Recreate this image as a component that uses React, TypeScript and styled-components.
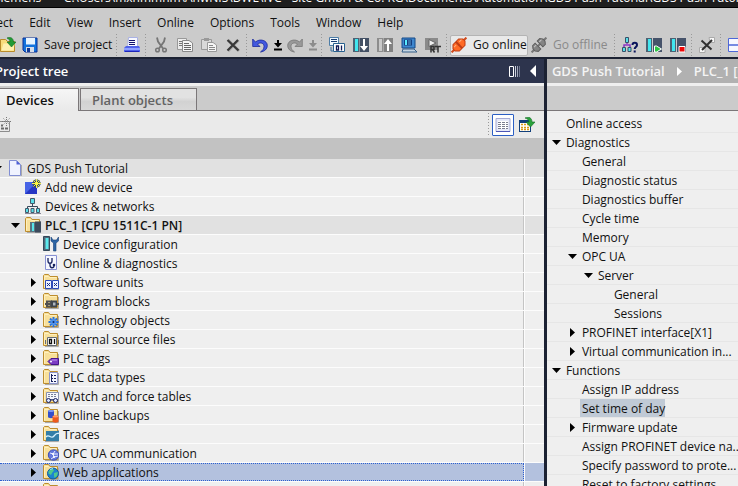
import React from "react";
import styled, { createGlobalStyle, css } from "styled-components";

const GlobalStyle = createGlobalStyle`
  * { box-sizing: border-box; }
  html, body, #root { height: 100%; }
  body {
    margin: 0;
    overflow: hidden;
    background: #cbcbcb;
    color: #111;
    font-family: "Open Sans", "Noto Sans", sans-serif;
    font-size: 12px;
    line-height: 18px;
  }
  button { font: inherit; color: inherit; background: none; border: 0; padding: 0; margin: 0; }
  a { color: inherit; text-decoration: none; }
  ul { list-style: none; margin: 0; padding: 0; }
`;

/* ---------- layout ---------- */

const Window = styled.div`
  display: flex;
  flex-direction: column;
  height: 100vh;
  overflow: hidden;
`;

const TitleBar = styled.header`
  flex: none;
  display: flex;
  align-items: flex-end;
  height: 8px;
  padding-bottom: 3px;
  overflow: hidden;
  background: #1e1e1e;
  border-bottom: 1px solid #000;
  color: #fff;
  white-space: pre;
  line-height: 12px;
  span { margin-left: -6px; }
`;

const MenuBar = styled.nav`
  flex: none;
  display: flex;
  gap: 16px;
  height: 25px;
  padding-top: 5px;
  margin-left: -26px;
  white-space: nowrap;
`;

const ToolBar = styled.div`
  flex: none;
  display: flex;
  align-items: center;
  height: 24px;
  margin-left: -3px;
  overflow: hidden;
  > * { flex: none; }
`;

const ToolButton = styled.button<{ $w?: number; $muted?: boolean; $boxed?: boolean }>`
  display: flex;
  align-items: center;
  justify-content: ${(p) => (p.$w && p.$w > 40 ? "flex-start" : "center")};
  gap: 6px;
  width: ${(p) => p.$w ?? 24}px;
  height: 21px;
  padding-left: ${(p) => (p.$w && p.$w > 40 ? 3 : 0)}px;
  white-space: nowrap;
  color: ${(p) => (p.$muted ? "#8a8a8a" : "#111")};
  ${(p) =>
    p.$boxed &&
    css`
      background: #e9e9e9;
      border: 1px solid #b4b4b4;
      border-radius: 2px;
      padding-left: 0;
    `}
`;

const Separator = styled.span`
  width: 1px;
  height: 23px;
  margin: 0 3px 0 1px;
  background: repeating-linear-gradient(#999 0 1px, transparent 1px 3px);
`;

const Body = styled.main`
  flex: 1;
  min-height: 0;
  display: grid;
  grid-template-columns: minmax(0, 74fr) 3px minmax(0, 26fr);
  border-top: 2px solid #1c2233;
`;

const Divider = styled.div`
  background: #1c2233;
`;

const Panel = styled.section`
  display: flex;
  flex-direction: column;
  min-width: 0;
  min-height: 0;
  overflow: hidden;
  background: #efefef;
  > * { flex: none; }
`;

const PanelHeader = styled.div<{ $tone: string }>`
  display: flex;
  align-items: center;
  gap: 2px;
  height: 27px;
  background: ${(p) => p.$tone};
  border-bottom: 3px solid #efefef;
  color: #fff;
  font-size: 13px;
  font-weight: 600;
  white-space: nowrap;
  overflow: hidden;
`;

const HeaderButton = styled.button`
  display: grid;
  place-items: center;
  height: 22px;
  min-width: 11px;
  &:last-child { width: 22px; }
`;

const PanelTitle = styled.h1`
  flex: 1;
  margin: 0 0 0 -5px;
  font: inherit;
`;

const Crumbs = styled.nav`
  display: flex;
  align-items: center;
  gap: 12px;
  padding-left: 5px;
  color: #f4f4f4;
`;

const TabStrip = styled.div`
  display: flex;
  align-items: flex-end;
  gap: 1px;
  height: 25px;
  background: #cbcbcb;
  box-shadow: inset 0 -1px #7b7779;
`;

const Tab = styled.button<{ $active?: boolean }>`
  height: ${(p) => (p.$active ? 23 : 22)}px;
  width: ${(p) => (p.$active ? 79 : 117)}px;
  padding-left: ${(p) => (p.$active ? 6 : 11)}px;
  margin-bottom: ${(p) => (p.$active ? 0 : 1)}px;
  text-align: left;
  border: 1px solid #7b7779;
  border-bottom: 0;
  border-left-width: ${(p) => (p.$active ? 0 : 1)}px;
  background: ${(p) =>
    p.$active
      ? "linear-gradient(#f6f6f6, #e9e9e9)"
      : "linear-gradient(#e2e2e2 0 40%, #d2d2d2 60%, #d8d8d8)"};
  color: ${(p) => (p.$active ? "#111" : "#636363")};
  font-size: 13px;
  font-weight: 600;
  line-height: 20px;
`;

const PanelTools = styled.div`
  display: flex;
  align-items: center;
  height: 27px;
  padding-right: 4px;
  background: #eaeaea;
  > svg { margin-left: -5px; }
`;

const Spacer = styled.span`
  flex: 1;
`;

const ViewButton = styled.button<{ $on?: boolean }>`
  display: grid;
  place-items: center;
  width: 22px;
  height: 22px;
  margin-right: 2px;
  border: 1px solid ${(p) => (p.$on ? "#2c5fc4" : "transparent")};
  border-radius: 1px;
  background: ${(p) => (p.$on ? "#fff" : "none")};
`;

const ColumnHead = styled.div`
  height: 21px;
  background: #c2c2c2;
`;

/* ---------- trees ---------- */

const TreeRow = styled.li<{ $depth: number; $shade?: boolean; $selected?: boolean }>`
  display: flex;
  height: 19px;
  border-bottom: 1px solid #fcfcfc;
  background: ${(p) => (p.$selected ? "#b3c1de" : p.$shade ? "#e1e1e1" : "#efefef")};
  font-weight: ${(p) => (p.$shade && p.$depth > 0 ? 600 : 400)};
  white-space: nowrap;
`;

const TreeCell = styled.div<{ $depth: number; $selected?: boolean }>`
  flex: 1;
  display: flex;
  align-items: center;
  height: 18px;
  padding-left: ${(p) => p.$depth * 18 - 9}px;
  margin-left: ${(p) => (p.$depth === 0 ? -9 : 0)}px;
  border-right: 1px solid #c4c4c4;
  ${(p) =>
    p.$selected &&
    css`
      border-top: 1px dotted #2c5fd0;
      border-bottom: 1px dotted #2c5fd0;
      border-right: 1px dotted #2c5fd0;
    `}
`;

const TreeLabel = styled.span`
  padding-top: 2px;
`;

const TreeEdge = styled.div`
  width: 20px;
  border-left: 1px solid #fcfcfc;
`;

const Twisty = styled.button`
  display: grid;
  place-items: center;
  flex: none;
  width: 12px;
  height: 16px;
`;

const TreeIcon = styled.span`
  display: grid;
  flex: none;
  width: 24px;
  padding-left: 4px;
`;

const NavList = styled.ul`
  padding-top: 3px;
`;

const NavRow = styled.li<{ $depth: number }>`
  display: flex;
  align-items: center;
  height: 19px;
  padding-left: ${(p) => p.$depth * 16 + 4}px;
  border-bottom: 1px solid #e6e6e6;
`;

const NavLink = styled.a<{ $current?: boolean }>`
  flex: none;
  height: 18px;
  margin-left: 1px;
  padding: 1px 0 0 2px;
  white-space: nowrap;
  background: ${(p) => (p.$current ? "#c0cad6" : "none")};
`;

/* ---------- icons ---------- */

const Icon = ({ children, size = 16 }: { children: React.ReactNode; size?: number }) => (
  <svg width={size} height={size} viewBox="0 0 16 16" fill="none" aria-hidden="true">
    {children}
  </svg>
);

const Folder = ({ children }: { children?: React.ReactNode }) => (
  <Icon>
    <path d="M2 15.5h13.5V4" stroke="#a9a9a9" />
    <path d="M.5 14.5V1.500l1-1h4l1.500 2h7.500v12z" fill="#f8e09a" stroke="#bd8d2e" />
    <path d="M1.500 13.500V2.500h4l1 1h7" stroke="#fff0bd" />
    {children}
  </Icon>
);

const Arrow = ({ open }: { open?: boolean }) =>
  open ? (
    <svg width="9" height="5" viewBox="0 0 9 5" aria-hidden="true"><path d="M0 0h9L4.500 5z" fill="#000" /></svg>
  ) : (
    <svg width="5" height="9" viewBox="0 0 5 9" aria-hidden="true"><path d="M0 0v9l5-4.500z" fill="#000" /></svg>
  );

const OpenIcon = () => (
  <Icon>
    <path d="M.5 14.500v-12h5l2 2h7v10z" fill="#f8dc7c" stroke="#b98b29" />
    <path d="M1.500 13.500l2-7h11l-1 7z" fill="#fff1b0" />
    <path d="M7 1c4-1.500 6.500 .5 6.500 4H16l-4.500 5L7 5h3C10 3 9 2 7 1z" fill="#219b36" stroke="#126b20" strokeWidth=".6" />
  </Icon>
);
const SaveIcon = () => (
  <Icon>
    <path d="M1 1h14v14H3l-2-2z" fill="#1272dc" stroke="#0a2f95" />
    <path d="M4 1h9v6.500H4z" fill="#e6f3ff" /><path d="M4 10h8v5H4z" fill="#d5dce8" /><path d="M5 11h3v4H5z" fill="#123a93" />
  </Icon>
);
const PrintIcon = () => (
  <Icon>
    <path d="M4.500.5h9v9h-10z" fill="#f7f8ff" stroke="#aab2e4" />
    <path d="M5 3.500h6M5 5.500h6M5 7.500h6" stroke="#10106e" />
    <path d="M2 9h13l1 2v4H0v-4z" fill="#5062ea" /><path d="M0 11h16v2H0z" fill="#8fa0ff" /><path d="M1 14.500h14" stroke="#1d25b8" />
  </Icon>
);
const CutIcon = () => (
  <Icon>
    <path d="M4 .5l1 4 5 7M12 .5l-1 4-5 7" stroke="#757575" strokeWidth="1.800" />
    <circle cx="4.500" cy="13" r="1.800" stroke="#757575" strokeWidth="1.500" /><circle cx="11.500" cy="13" r="1.800" stroke="#757575" strokeWidth="1.500" />
  </Icon>
);
const CopyIcon = () => (
  <Icon>
    <path d="M.5 1.500h9v11h-9z" fill="#ededed" stroke="#999" /><path d="M2 4.500h4M2 6.500h4M2 8.500h4" stroke="#777" />
    <path d="M5.500 3.500H12L15.500 6v8.500h-10z" fill="#f5f5f5" stroke="#888" /><path d="M7 6.500h5M7 8.500h7M7 10.500h7M7 12.500h7" stroke="#666" />
  </Icon>
);
const PasteIcon = () => (
  <Icon>
    <path d="M.5 2.500h10v10H.5z" fill="#d9d9d9" stroke="#999" /><path d="M3 1h5v3H3z" fill="#999" />
    <path d="M6.500 5.500H12L15.500 8v6.500h-9z" fill="#f5f5f5" stroke="#999" /><path d="M8 8.500h4M8 10.500h6M8 12.500h6" stroke="#888" />
  </Icon>
);
const DeleteIcon = () => (
  <Icon><path d="M3 3l11 11M13.500 3L3 14" stroke="#a8a8a8" strokeWidth="3" /><path d="M2.500 3l11 10.500M13 3L2.500 13.500" stroke="#383838" strokeWidth="2.200" /></Icon>
);
const UndoIcon = ({ muted, flip }: { muted?: boolean; flip?: boolean }) => (
  <Icon>
    <g transform={flip ? "matrix(-1 0 0 1 16 0)" : undefined} fill={muted ? "#999" : "#4259df"} stroke={muted ? "#777" : "#1b2a9c"} strokeWidth=".8">
      <path d="M.7 2v7.500H8L5.500 7c3-2 6.500-1 6.500 2.500 0 2.500-1.500 4-3.500 5.500 4-.5 6.800-3 6.800-6.500C15.300 3.500 8 1 3.500 5z" />
    </g>
  </Icon>
);
const DropIcon = ({ muted }: { muted?: boolean }) => (
  <svg width="8" height="11" viewBox="0 0 8 11" fill={muted ? "#8c8c8c" : "#000"} aria-hidden="true"><path d="M3 0h2v3h3L4 7.500 0 3h3zM0 8.500h8v2H0z" /></svg>
);
const CompileIcon = () => (
  <Icon>
    <path d="M.5.5h9v8h-9z" fill="#f3faff" stroke="#4d7da7" /><path d="M2 2.500h6M2 4.500h6" stroke="#183d73" />
    <path d="M2 10v4h2" stroke="#3f73a0" /><path d="M4.500 6.500h11v8h-11z" fill="#fff" stroke="#28618f" />
    <path d="M7.500 9h2v4h-2zM12.500 8.500v5" stroke="#111a56" strokeWidth="1.300" />
  </Icon>
);
const LoadIcon = ({ up }: { up?: boolean }) => (
  <Icon>
    <path d="M0 1h6v14H0z" fill={up ? "#8d8d8d" : "#4b6274"} /><path d="M2 2h3v12H2z" fill={up ? "#c9c9c9" : "#42e6ef"} />
    <path d="M6.500 1H16v14H6.500z" fill={up ? "#818181" : "#435064"} />
    <path d={up ? "M11 2l4 5h-3v7h-2V7H7z" : "M10 2h2v7h3l-4 5-4-5h3z"} fill="#fff" />
  </Icon>
);
const PcIcon = () => (
  <Icon>
    <path d="M1 1h13v10H1z" fill="#3f87ce" stroke="#174a88" /><path d="M3 2.500h8v6H3z" fill="#153f80" /><path d="M4 3h2v5H4z" fill="#59ecff" /><path d="M7 3h3v5H7z" fill="#3b6fa7" />
    <path d="M2 12h11l3 3H1z" fill="#c4d3e0" stroke="#355f89" />
  </Icon>
);
const RtIcon = () => (
  <Icon>
    <path d="M0 1h13v12H0z" fill="#8a8a8a" /><path d="M4 2.500l7 3.500-7 3.500z" fill="#eee" stroke="#666" />
    <path d="M6 15.500v-6h3v3H6m1.500 0l2 3M10 9.500h6M13 9v6.500" stroke="#333" strokeWidth="1.500" />
  </Icon>
);
const PlugIcon = ({ muted }: { muted?: boolean }) => (
  <Icon>
    <g transform="rotate(-45 8 8)">
      <path d="M-2.500 8h21" stroke={muted ? "#777" : "#d04a1c"} strokeWidth="2" />
      <path
        d={muted ? "M1 6.500L3 4h3.500v8H3L1 9.500zM15 6.500L13 4H9.500v8H13l2-2.500z" : "M1 6.500L4 3.500h3.500v9H4L1 9.500zM15 6.500l-3-3H8.500v9H12l3-3z"}
        fill={muted ? "#858585" : "#ff6a25"}
        stroke={muted ? "#5e5e5e" : "#c03c12"}
      />
      <path d="M3 6h3M10.500 6h3" stroke={muted ? "#c4c4c4" : "#ffb381"} />
    </g>
  </Icon>
);
const AccessIcon = () => (
  <Icon>
    <path d="M5 5v2M2 11V8h6v3" stroke="#8a35c4" strokeWidth="1.500" /><path d="M3.500.5h3v5h-3zM.5 10.500h3v4h-3zM6 10.500h3v4H6z" fill="#59dfe8" stroke="#36516a" />
    <path d="M10.500 8c0-3 4.500-3 4.500 0 0 2-2.300 2-2.300 4M12.700 13.500v2" stroke="#0a145c" strokeWidth="2" />
  </Icon>
);
const RunIcon = ({ stop }: { stop?: boolean }) => (
  <Icon>
    <path d="M0 1h6v14H0z" fill="#4b6274" /><path d="M2 2h3v12H2z" fill="#42e6ef" /><path d="M7 1h9v14H7z" fill="#46536a" />
    {stop ? <path d="M9 9.500h6v5.500H9z" fill="#f00707" stroke="#fff" /> : <path d="M8.500 9h2l5 3-5 3h-2z" fill="#2bc541" stroke="#fff" />}
  </Icon>
);
const CrossRefIcon = () => (
  <Icon>
    <path d="M10 .5h5.500v5H11zM.5 10.500H6v5H.5z" fill="#f7f7f7" stroke="#aaa" /><path d="M2.500 3.500l10 9M13 3L3 13" stroke="#303030" strokeWidth="2" />
  </Icon>
);
const SplitIcon = () => (
  <Icon><path d="M.5 1.500h15v13H.5z" fill="#f7f8ff" stroke="#4d67d8" /><path d="M0 8h16" stroke="#4d67d8" strokeWidth="1.500" /></Icon>
);
const ColumnsIcon = () => (
  <svg width="11" height="11" viewBox="0 0 11 11" fill="none" aria-hidden="true"><path d="M.5.5h4v10h-4z" stroke="#fff" /><path d="M6.500 0v11" stroke="#cdd1de" /><path d="M8.500 0v11" stroke="#a1a7b9" /><path d="M10.500 0v11" stroke="#70778f" /></svg>
);
const CollapseIcon = () => (
  <svg width="6" height="12" viewBox="0 0 6 12" aria-hidden="true"><path d="M6 0v12L0 6z" fill="#fff" /></svg>
);
const GridIcon = () => (
  <Icon>
    <path d="M1 1.500h14v13H1z" fill="#e6e9f8" stroke="#a4aad4" /><path d="M1 14.500h14" stroke="#4c55b5" />
    <path d="M3 4h10v8H3z" fill="#fff" />
    <path d="M3 5.500h10M3 7.500h10M3 9.500h10M3 11.500h10" stroke="#7b7e90" strokeDasharray="3 1" />
  </Icon>
);
const ExportIcon = () => (
  <Icon>
    <path d="M0 3h12v12H0z" fill="#123f7b" /><path d="M1 6h10v8H1z" fill="#fff" />
    <path d="M2 7.500h8M2 10.500h8M2 12.500h8" stroke="#d99a12" strokeWidth="1.500" strokeDasharray="2 1" />
    <path d="M6 1c4-2 7 0 7 4h3l-4.500 5L7 5h3c0-2-1-3-4-4z" fill="#2aa23c" stroke="#126b25" strokeWidth=".6" />
  </Icon>
);
const NewGridIcon = () => (
  <Icon>
    <path d="M.5 4.500h14v10H.5z" fill="#e9e9e9" stroke="#8d8d8d" /><path d="M2 8.500h6M2 11.500h11" stroke="#6a6a6a" strokeWidth="2" strokeDasharray="3 1" />
    <path d="M11.500 0v9M7 4.500h9M8.500 1.500l6 6M14.500 1.500l-6 6" stroke="#777" strokeDasharray="1 1" />
  </Icon>
);
const PageIcon = () => (
  <Icon><path d="M2.500.5h7l4 4v11h-11z" fill="#f0f3ff" stroke="#818ed3" /><path d="M9.500.5v4h4z" fill="#4e61d6" /><path d="M14.500 5v11" stroke="#aaa" /></Icon>
);
const AddIcon = () => (
  <Icon>
    <path d="M0 3h12v12H0z" fill="#2536c4" /><path d="M0 3h12L0 15z" fill="#4663e6" />
    <path d="M11.500 0v9M7 4.500h9M8.500 1.500l6 6M14.500 1.500l-6 6" stroke="#345" strokeWidth="2" /><path d="M11.500 0v9M7 4.500h9M8.500 1.500l6 6M14.500 1.500l-6 6" stroke="#faf545" />
  </Icon>
);
const NetworkIcon = () => (
  <Icon>
    <path d="M7.500 5v4M2.500 11V8.500h10V11" stroke="#35495c" /><path d="M5.500.5h4v5h-4zM.5 10.500h3v4h-3zM6 10.500h3v4H6zM11.500 10.500h3v4h-3z" fill="#59dfe8" stroke="#42586a" /><path d="M0 15.500h16" stroke="#889" />
  </Icon>
);
const ConfigIcon = () => (
  <Icon>
    <path d="M.5.5h6v14h-6z" fill="#526778" stroke="#33485a" /><path d="M2.500 2h3v11h-3z" fill="#5be9ed" />
    <path d="M8 1v4l2.500 2v8h2.500V7L15.500 5V1l-2 3h-3.500z" fill="#2c65a5" stroke="#183f77" strokeWidth=".6" />
  </Icon>
);
const DiagIcon = () => (
  <Icon>
    <path d="M2.500.5h11v14h-11z" fill="#f5f7ff" stroke="#8790d3" /><path d="M5 3v3c0 3 4 3 4 0V3M7 8v2c0 4 4 3 4 1" stroke="#15205e" strokeWidth="1.300" /><circle cx="11" cy="10" r="1.300" fill="#15205e" />
  </Icon>
);
const PlcFolder = () => (
  <Folder><path d="M5 5h5v10H5z" fill="#58717f" /><path d="M7 6h2v8H7z" fill="#58e4ea" /><path d="M10 4.500h6v11h-6z" fill="#3c4a5c" /></Folder>
);
const UnitsIcon = () => (
  <Folder><path d="M2.500 6.500h6v8h-6zM9.500 6.500h6v8h-6z" fill="#eef2ff" stroke="#2c49b8" /><path d="M4 9l3 3m0-3l-3 3m7-3l3 3m0-3l-3 3" stroke="#172c83" /></Folder>
);
const BlocksIcon = () => (
  <Folder><path d="M2 11h14M4 8.500h4v5H4z" stroke="#505050" strokeWidth="2" /><path d="M8 7.500h6v7H8z" fill="#3f454d" /><path d="M10 9.500h2.500v3H10z" fill="#aeb6bf" /></Folder>
);
const TechIcon = () => (
  <Folder><path d="M10.500 5v10M5.500 10h10M7 6.500l7 7M14 6.500l-7 7" stroke="#2671dc" strokeWidth="2" /><circle cx="10.500" cy="10" r="3" fill="#4e91ed" /><circle cx="10.500" cy="10" r="1" fill="#0d2a66" /></Folder>
);
const SourceIcon = () => (
  <Folder><path d="M4.500 6.500h9v8h-9z" fill="#fff" stroke="#646b73" /><path d="M2.500 9v4M15.500 9v4" stroke="#646b73" /><path d="M6.500 8.500h2v4h-2zM11.500 8v5" stroke="#111" strokeWidth="1.300" /></Folder>
);
const TagIcon = () => (
  <Folder><path d="M5 11.500l3-3h7.500v6H8z" fill="#7b3cc4" stroke="#47148c" /><circle cx="8" cy="11.500" r="1" fill="#fff" /><path d="M9 10h5" stroke="#c297f2" /></Folder>
);
const TypesIcon = () => (
  <Folder><path d="M6.500 3.500h8v11h-8z" fill="#f4f6ff" stroke="#8b94cd" /><path d="M8.500 5v8M9 6.500h1m1 0h2M9 9.500h1m1 0h2M9 12.500h1m1 0h2" stroke="#17215e" /></Folder>
);
const WatchIcon = () => (
  <Folder><path d="M3.500 4.500h12v7h-12z" fill="#f6f7fc" stroke="#8992b1" /><path d="M5 6.500h9M5 8.500h9" stroke="#777f99" strokeDasharray="2 1" /><circle cx="5.500" cy="12.500" r="2" fill="#dfe8ff" stroke="#17205e" /><circle cx="12.500" cy="12.500" r="2" fill="#dfe8ff" stroke="#17205e" /><path d="M7 12h4" stroke="#17205e" /></Folder>
);
const BackupIcon = () => (
  <Folder><path d="M5 4c0-1.500 6-1.500 6 0v6c0 1.500-6 1.500-6 0z" fill="#334fca" /><ellipse cx="8" cy="4" rx="3" ry="1" fill="#829cf5" /><path d="M9.500 9.500c0-1.500 6-1.500 6 0v5c0 1.500-6 1.500-6 0z" fill="#ee5a1c" /><ellipse cx="12.500" cy="9.500" rx="3" ry="1" fill="#ff9a66" /></Folder>
);
const TraceIcon = () => (
  <Folder><path d="M3 5h13v10H3z" fill="#347ea7" /><path d="M3 11c3-4 5 3 8-1s3-2 5-3" stroke="#d8f2ff" strokeWidth="1.300" /></Folder>
);
const OpcIcon = () => (
  <Folder><circle cx="10.500" cy="10" r="5.200" fill="#6678dc" stroke="#3f50b8" /><path d="M7 8l3 1 2-3m-2 3l1 3 4-1m-4 1l-3 2m2-5l5 0" stroke="#e8ecff" /><circle cx="10" cy="9" r="1" fill="#fff" /><circle cx="11" cy="12" r="1" fill="#fff" /></Folder>
);
const WebIcon = () => (
  <Folder><circle cx="10" cy="9.500" r="5.500" fill="#1b83d1" stroke="#125a9d" /><path d="M5.500 7l4-2.500 1.500 2-2 2.500-1 2-2.500-1.500zM11 9l4-1-1 4-2.500 2-.5-2z" fill="#4ec78c" /><path d="M7 5.500l3-1" stroke="#9be6ff" /></Folder>
);

/* ---------- data ---------- */

type Row = { label: string; depth: number; icon: React.FC; state?: "open" | "closed"; shade?: boolean; selected?: boolean };

const projectRows: Row[] = [
  { label: "GDS Push Tutorial", depth: 0, icon: PageIcon, state: "open", shade: true },
  { label: "Add new device", depth: 1, icon: AddIcon },
  { label: "Devices & networks", depth: 1, icon: NetworkIcon },
  { label: "PLC_1 [CPU 1511C-1 PN]", depth: 1, icon: PlcFolder, state: "open", shade: true },
  { label: "Device configuration", depth: 2, icon: ConfigIcon },
  { label: "Online & diagnostics", depth: 2, icon: DiagIcon },
  { label: "Software units", depth: 2, icon: UnitsIcon, state: "closed" },
  { label: "Program blocks", depth: 2, icon: BlocksIcon, state: "closed" },
  { label: "Technology objects", depth: 2, icon: TechIcon, state: "closed" },
  { label: "External source files", depth: 2, icon: SourceIcon, state: "closed" },
  { label: "PLC tags", depth: 2, icon: TagIcon, state: "closed" },
  { label: "PLC data types", depth: 2, icon: TypesIcon, state: "closed" },
  { label: "Watch and force tables", depth: 2, icon: WatchIcon, state: "closed" },
  { label: "Online backups", depth: 2, icon: BackupIcon, state: "closed" },
  { label: "Traces", depth: 2, icon: TraceIcon, state: "closed" },
  { label: "OPC UA communication", depth: 2, icon: OpcIcon, state: "closed" },
  { label: "Web applications", depth: 2, icon: WebIcon, state: "closed", selected: true },
  { label: "", depth: 2, icon: Folder },
];

type NavItem = { label: string; depth: number; state?: "open" | "closed"; current?: boolean };

const navItems: NavItem[] = [
  { label: "Online access", depth: 0 },
  { label: "Diagnostics", depth: 0, state: "open" },
  { label: "General", depth: 1 },
  { label: "Diagnostic status", depth: 1 },
  { label: "Diagnostics buffer", depth: 1 },
  { label: "Cycle time", depth: 1 },
  { label: "Memory", depth: 1 },
  { label: "OPC UA", depth: 1, state: "open" },
  { label: "Server", depth: 2, state: "open" },
  { label: "General", depth: 3 },
  { label: "Sessions", depth: 3 },
  { label: "PROFINET interface[X1]", depth: 1, state: "closed" },
  { label: "Virtual communication in...", depth: 1, state: "closed" },
  { label: "Functions", depth: 0, state: "open" },
  { label: "Assign IP address", depth: 1 },
  { label: "Set time of day", depth: 1, current: true },
  { label: "Firmware update", depth: 1, state: "closed" },
  { label: "Assign PROFINET device na...", depth: 1 },
  { label: "Specify password to prote...", depth: 1 },
  { label: "Reset to factory settings", depth: 1 },
];

const menus = ["Project", "Edit", "View", "Insert", "Online", "Options", "Tools", "Window", "Help"];

const Twist = ({ state, label }: { state?: "open" | "closed"; label: string }) =>
  state ? (
    <Twisty aria-label={`Toggle ${label}`} aria-expanded={state === "open"}><Arrow open={state === "open"} /></Twisty>
  ) : (
    <Twisty as="span" />
  );

export default function App() {
  return (
    <Window>
      <GlobalStyle />
      <TitleBar>
        <span>{"Siemens   -   C:\\Users\\mxnmmhm\\AnwNIS\\DWE\\IVC - Site GmbH & Co. KG\\Documents\\Automation\\GDS Push Tutorial\\GDS Push Tutorial"}</span>
      </TitleBar>
      <MenuBar aria-label="Main menu">
        {menus.map((m) => <button key={m}>{m}</button>)}
      </MenuBar>
      <ToolBar role="toolbar" aria-label="Tools">
        <ToolButton $w={22} aria-label="Open project"><OpenIcon /></ToolButton>
        <ToolButton $w={96}><SaveIcon />Save project</ToolButton>
        <Separator />
        <ToolButton aria-label="Print"><PrintIcon /></ToolButton>
        <Separator />
        <ToolButton aria-label="Cut"><CutIcon /></ToolButton>
        <ToolButton aria-label="Copy"><CopyIcon /></ToolButton>
        <ToolButton aria-label="Paste"><PasteIcon /></ToolButton>
        <ToolButton aria-label="Delete"><DeleteIcon /></ToolButton>
        <Separator />
        <ToolButton $w={20} aria-label="Undo"><UndoIcon /></ToolButton>
        <ToolButton $w={15} aria-label="Undo list"><DropIcon /></ToolButton>
        <ToolButton $w={20} aria-label="Redo"><UndoIcon muted flip /></ToolButton>
        <ToolButton $w={15} aria-label="Redo list"><DropIcon muted /></ToolButton>
        <Separator />
        <ToolButton aria-label="Compile"><CompileIcon /></ToolButton>
        <ToolButton aria-label="Download to device"><LoadIcon /></ToolButton>
        <ToolButton aria-label="Upload from device"><LoadIcon up /></ToolButton>
        <ToolButton aria-label="Start simulation"><PcIcon /></ToolButton>
        <ToolButton aria-label="Start runtime"><RtIcon /></ToolButton>
        <Separator />
        <ToolButton $w={78} $boxed><PlugIcon />Go online</ToolButton>
        <ToolButton $w={85} $muted><PlugIcon muted />Go offline</ToolButton>
        <Separator />
        <ToolButton aria-label="Accessible devices"><AccessIcon /></ToolButton>
        <ToolButton aria-label="Start CPU"><RunIcon /></ToolButton>
        <ToolButton aria-label="Stop CPU"><RunIcon stop /></ToolButton>
        <Separator />
        <ToolButton aria-label="Cross-references"><CrossRefIcon /></ToolButton>
        <Separator />
        <ToolButton aria-label="Split editor"><SplitIcon /></ToolButton>
      </ToolBar>
      <Body>
        <Panel>
          <PanelHeader $tone="#2d344d">
            <PanelTitle>Project tree</PanelTitle>
            <HeaderButton aria-label="Columns"><ColumnsIcon /></HeaderButton>
            <HeaderButton aria-label="Collapse"><CollapseIcon /></HeaderButton>
          </PanelHeader>
          <TabStrip role="tablist">
            <Tab role="tab" aria-selected="true" $active>Devices</Tab>
            <Tab role="tab" aria-selected="false">Plant objects</Tab>
          </TabStrip>
          <PanelTools>
            <NewGridIcon />
            <Spacer />
            <Separator />
            <ViewButton $on aria-label="Details view"><GridIcon /></ViewButton>
            <ViewButton aria-label="Export list"><ExportIcon /></ViewButton>
          </PanelTools>
          <ColumnHead />
          <ul role="tree" aria-label="Project">
            {projectRows.map(({ icon: RowIcon, ...r }) => (
              <TreeRow key={r.label} role="treeitem" aria-selected={!!r.selected} $depth={r.depth} $shade={r.shade} $selected={r.selected}>
                <TreeCell $depth={r.depth} $selected={r.selected}>
                  <Twist state={r.state} label={r.label} />
                  <TreeIcon><RowIcon /></TreeIcon>
                  <TreeLabel>{r.label}</TreeLabel>
                </TreeCell>
                <TreeEdge />
              </TreeRow>
            ))}
          </ul>
        </Panel>
        <Divider />
        <Panel>
          <PanelHeader $tone="#b1b1b1">
            <Crumbs aria-label="Breadcrumb">
              <a href="#project">GDS Push Tutorial</a>
              <svg width="5" height="9" viewBox="0 0 5 9" aria-hidden="true"><path d="M0 0v9l5-4.500z" fill="#fff" /></svg>
              <a href="#plc">PLC_1 [CPU 1511C-1 PN]</a>
            </Crumbs>
          </PanelHeader>
          <TabStrip />
          <NavList>
            {navItems.map((n, i) => (
              <NavRow key={i} $depth={n.depth}>
                <Twist state={n.state} label={n.label} />
                <NavLink href={`#item-${i}`} $current={n.current}>{n.label}</NavLink>
              </NavRow>
            ))}
          </NavList>
        </Panel>
      </Body>
    </Window>
  );
}
